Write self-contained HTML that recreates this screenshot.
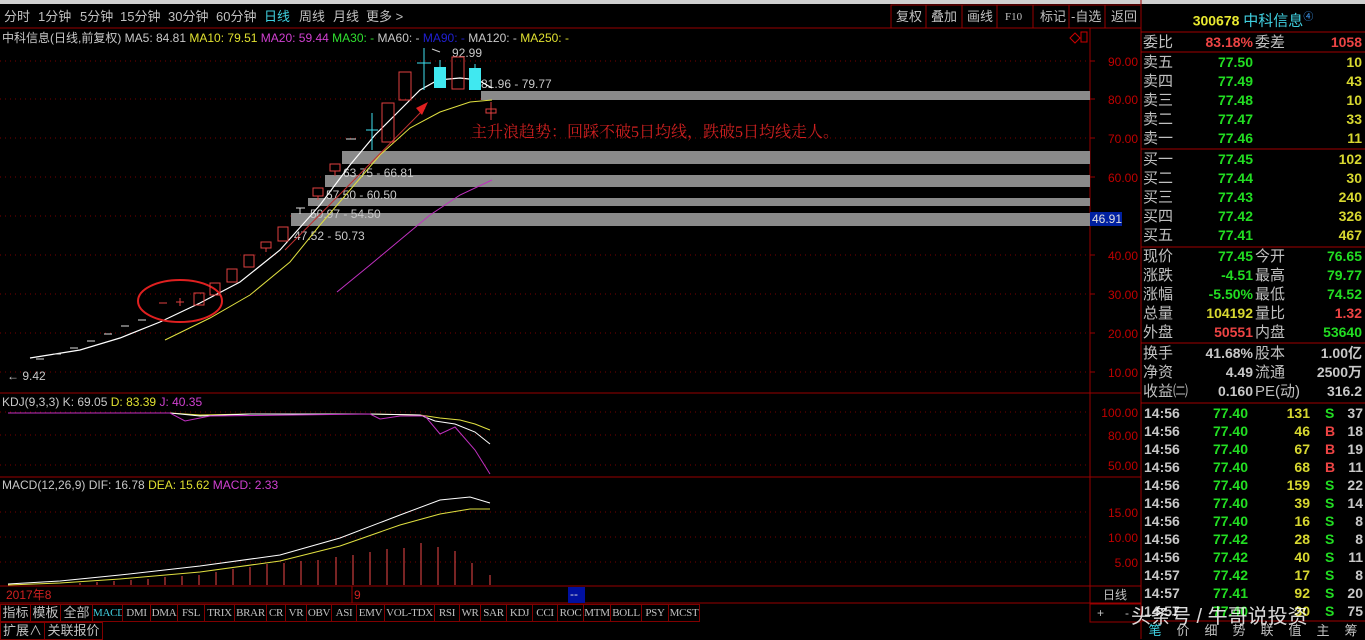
<!DOCTYPE html>
<html><head><meta charset="utf-8">
<style>
*{margin:0;padding:0;box-sizing:border-box}
body{width:1365px;height:639px;background:#000;overflow:hidden;position:relative;font-family:"Liberation Sans","Noto Sans CJK SC",sans-serif}
.a{position:absolute;white-space:nowrap}
.tabs{position:absolute;left:0;top:604px;height:18px;display:flex}
.tabs div{border:1px solid #800000;border-left:none;height:18px;color:#c0c0c0;font:11px "Liberation Serif","Noto Serif CJK SC",serif;line-height:16px;padding:0;text-align:center;overflow:hidden;letter-spacing:-0.3px}
.tabs div.c{font-size:13px;font-family:"Liberation Sans","Noto Sans CJK SC",sans-serif;letter-spacing:0}
.rp{position:absolute;left:1141px;font-size:15px;height:19px;line-height:19px;width:224px}
.rp span{position:absolute;white-space:nowrap}
.l{left:2px;color:#c0c0c0}
.v1{right:112px;font-weight:bold;font-size:14px}
.l2{left:114px;color:#c0c0c0}
.v2{right:3px;font-weight:bold;font-size:14px}
.g{color:#22dd22}.y{color:#d8d830}.r{color:#ee4444}.w{color:#c8c8c8}
.tr{position:absolute;left:1141px;width:224px;height:18px;font-size:14px;font-weight:bold;line-height:18px}
.tr span{position:absolute}
</style></head><body>
<svg width="1365" height="639" style="position:absolute;left:0;top:0" font-family="Liberation Sans, Noto Sans CJK SC, sans-serif">
<rect x="0" y="0" width="1365" height="4" fill="#d0d0d0"/>
<line x1="0" y1="28" x2="1141" y2="28" stroke="#900"/>
<g fill="#c0c0c0" font-size="13">
<text x="4" y="21">分时</text><text x="38" y="21">1分钟</text><text x="80" y="21">5分钟</text><text x="120" y="21">15分钟</text><text x="168" y="21">30分钟</text><text x="216" y="21">60分钟</text>
<text x="264" y="21" fill="#40d0e0">日线</text><text x="299" y="21">周线</text><text x="333" y="21">月线</text><text x="366" y="21">更多 &gt;</text>
</g>
<g stroke="#900" fill="none"><rect x="891" y="5" width="250" height="23"/>
<line x1="926" y1="5" x2="926" y2="28"/><line x1="962" y1="5" x2="962" y2="28"/><line x1="997" y1="5" x2="997" y2="28"/><line x1="1033" y1="5" x2="1033" y2="28"/><line x1="1069" y1="5" x2="1069" y2="28"/><line x1="1105" y1="5" x2="1105" y2="28"/></g>
<g fill="#c0c0c0" font-size="13"><text x="896" y="21">复权</text><text x="931" y="21">叠加</text><text x="967" y="21">画线</text><text x="1005" y="20" font-size="11" font-family="Liberation Serif">F10</text><text x="1040" y="21">标记</text><text x="1071" y="21">-自选</text><text x="1111" y="21">返回</text></g>
<line x1="1090" y1="28" x2="1090" y2="603" stroke="#900"/>
<line x1="1141" y1="0" x2="1141" y2="639" stroke="#900"/>
<line x1="0" y1="393" x2="1141" y2="393" stroke="#900"/>
<line x1="0" y1="477" x2="1141" y2="477" stroke="#900"/>
<line x1="0" y1="586" x2="1141" y2="586" stroke="#900"/>
<line x1="0" y1="603" x2="1141" y2="603" stroke="#900"/>
<line x1="352" y1="586" x2="352" y2="603" stroke="#900"/>
<path d="M1070 38 l5 -5 l5 5 l-5 5z" fill="none" stroke="#c00"/><rect x="1081" y="32" width="6" height="10" fill="none" stroke="#c00"/>
<g stroke="#700" stroke-dasharray="1 4">
<line x1="0" y1="61" x2="1090" y2="61"/><line x1="0" y1="99" x2="1090" y2="99"/><line x1="0" y1="138" x2="1090" y2="138"/><line x1="0" y1="177" x2="1090" y2="177"/><line x1="0" y1="216" x2="1090" y2="216"/><line x1="0" y1="255" x2="1090" y2="255"/><line x1="0" y1="294" x2="1090" y2="294"/><line x1="0" y1="333" x2="1090" y2="333"/><line x1="0" y1="372" x2="1090" y2="372"/>
<line x1="0" y1="412" x2="1090" y2="412"/><line x1="0" y1="435" x2="1090" y2="435"/><line x1="0" y1="465" x2="1090" y2="465"/>
<line x1="0" y1="512" x2="1090" y2="512"/><line x1="0" y1="537" x2="1090" y2="537"/><line x1="0" y1="562" x2="1090" y2="562"/>
</g>
<g stroke="#900"><line x1="1090" y1="61" x2="1095" y2="61"/><line x1="1090" y1="99" x2="1095" y2="99"/><line x1="1090" y1="138" x2="1095" y2="138"/><line x1="1090" y1="177" x2="1095" y2="177"/><line x1="1090" y1="255" x2="1095" y2="255"/><line x1="1090" y1="294" x2="1095" y2="294"/><line x1="1090" y1="333" x2="1095" y2="333"/><line x1="1090" y1="372" x2="1095" y2="372"/></g>
<g fill="#c00000" font-size="12" text-anchor="end">
<text x="1138" y="66">90.00</text><text x="1138" y="104">80.00</text><text x="1138" y="143">70.00</text><text x="1138" y="182">60.00</text><text x="1138" y="260">40.00</text><text x="1138" y="299">30.00</text><text x="1138" y="338">20.00</text><text x="1138" y="377">10.00</text>
<text x="1138" y="417">100.00</text><text x="1138" y="440">80.00</text><text x="1138" y="470">50.00</text>
<text x="1138" y="517">15.00</text><text x="1138" y="542">10.00</text><text x="1138" y="567">5.00</text>
</g>
<text x="2" y="42" font-size="12" fill="#c8c8c8">中科信息(日线,前复权) MA5: 84.81 <tspan fill="#e0e030">MA10: 79.51</tspan> <tspan fill="#d040d0">MA20: 59.44</tspan> <tspan fill="#30e030">MA30: -</tspan> <tspan fill="#c8c8c8">MA60: -</tspan> <tspan fill="#2020d0">MA90: -</tspan> <tspan>MA120: -</tspan> <tspan fill="#e0e030">MA250: -</tspan></text>
<g fill="#8a8a8a"><rect x="481" y="91" width="609" height="9"/><rect x="342" y="151" width="748" height="13"/><rect x="325" y="175" width="765" height="12"/><rect x="308" y="198" width="782" height="8"/><rect x="291" y="213" width="799" height="13"/></g>
<rect x="1090" y="212" width="32" height="14" fill="#0020a0"/><text x="1092" y="223" font-size="12" fill="#e0e0e0">46.91</text>
<g fill="#c8c8c8" font-size="12"><text x="481" y="88">81.96 - 79.77</text><text x="452" y="57">92.99</text><text x="343" y="177">63.75 - 66.81</text><text x="326" y="199">57.50 - 60.50</text><text x="294" y="240">47.52 - 50.73</text><text x="310" y="218">50.97 - 54.50</text><text x="7" y="380">← 9.42</text></g>
<path d="M440 52 l-8 -3" stroke="#ccc"/>
<polyline fill="none" stroke="#fff" stroke-width="1.2" points="30,358 80,350 120,338 160,322 200,303 240,282 280,250 320,205 350,165 375,135 400,110 420,90 438,80 460,78 478,80 492,88"/>
<polyline fill="none" stroke="#e0e040" points="165,340 210,318 250,295 290,262 320,225 350,190 380,155 410,128 440,112 470,102 492,100"/>
<polyline fill="none" stroke="#c030c0" points="337,292 370,265 400,240 430,215 460,195 492,180"/>
<line x1="285" y1="250" x2="425" y2="108" stroke="#c03030"/><path d="M428 102 l-12 6 l6 7z" fill="#e02020"/>
<ellipse cx="180" cy="301" rx="42" ry="21" fill="none" stroke="#e02020" stroke-width="2"/>
<text x="471" y="137" font-size="16" fill="#d02020" font-family="Liberation Serif, Noto Serif CJK SC, serif">主升浪趋势：回踩不破5日均线，跌破5日均线走人。</text>
<g stroke="#ddd"><line x1="36" y1="359" x2="44" y2="359"/><line x1="53" y1="354" x2="61" y2="354"/><line x1="70" y1="348" x2="78" y2="348"/><line x1="87" y1="341" x2="95" y2="341"/><line x1="104" y1="334" x2="112" y2="334"/><line x1="121" y1="326" x2="129" y2="326"/><line x1="138" y1="320" x2="146" y2="320"/><line x1="346" y1="139" x2="356" y2="139"/><line x1="296" y1="208" x2="305" y2="208"/><line x1="300" y1="208" x2="300" y2="214"/></g>
<g stroke="#e04040"><line x1="159" y1="303" x2="167" y2="303"/><line x1="176" y1="302" x2="184" y2="302"/><line x1="180" y1="298" x2="180" y2="306"/></g>
<g fill="none" stroke="#e04040">
<rect x="194" y="293" width="10" height="12"/><rect x="210" y="283" width="10" height="12"/><rect x="227" y="269" width="10" height="13"/><rect x="244" y="255" width="10" height="12"/><rect x="261" y="242" width="10" height="6"/><line x1="266" y1="248" x2="266" y2="252"/><rect x="278" y="227" width="10" height="14"/>
<rect x="313" y="188" width="10" height="8"/><line x1="318" y1="196" x2="318" y2="200"/><rect x="330" y="164" width="10" height="7"/><line x1="335" y1="171" x2="335" y2="176"/>
<rect x="382" y="103" width="12" height="39"/><rect x="399" y="72" width="12" height="28"/><rect x="452" y="57" width="12" height="32"/><rect x="486" y="109" width="10" height="4"/><line x1="491" y1="102" x2="491" y2="120"/>
</g>
<g stroke="#40e0f0"><line x1="372" y1="113" x2="372" y2="150"/><line x1="366" y1="130" x2="378" y2="130"/><line x1="424" y1="48" x2="424" y2="90"/><line x1="417" y1="63" x2="431" y2="63"/><line x1="440" y1="60" x2="440" y2="67"/><line x1="475" y1="64" x2="475" y2="68"/></g>
<g fill="#40e8f0"><rect x="434" y="67" width="12" height="21"/><rect x="469" y="68" width="12" height="22"/></g>
<text x="2" y="406" font-size="12" fill="#c8c8c8">KDJ(9,3,3) K: 69.05 <tspan fill="#e0e030">D: 83.39</tspan> <tspan fill="#d040d0">J: 40.35</tspan></text>
<polyline fill="none" stroke="#e0e040" points="8,413 170,413 200,415 250,414 370,414 420,415 440,418 460,420 475,424 490,430"/>
<polyline fill="none" stroke="#fff" points="8,413 170,413 200,416 250,414 370,414 420,415 435,421 455,424 475,432 490,444"/>
<polyline fill="none" stroke="#c030c0" points="8,413 170,413 185,421 210,416 370,414 380,419 400,416 425,416 440,434 455,427 475,450 490,474"/>
<text x="2" y="489" font-size="12" fill="#c8c8c8">MACD(12,26,9) DIF: 16.78 <tspan fill="#e0e030">DEA: 15.62</tspan> <tspan fill="#d040d0">MACD: 2.33</tspan></text>
<polyline fill="none" stroke="#fff" points="8,584 60,581 120,575 200,566 280,555 340,538 400,515 440,500 470,497 490,503"/>
<polyline fill="none" stroke="#e0e040" points="8,585 60,583 120,579 200,572 280,561 340,546 400,525 440,514 470,509 490,509"/>
<g stroke="#f04848">
<line x1="80" y1="585" x2="80" y2="583"/><line x1="97" y1="585" x2="97" y2="582"/><line x1="114" y1="585" x2="114" y2="581"/><line x1="131" y1="585" x2="131" y2="580"/><line x1="148" y1="585" x2="148" y2="579"/><line x1="165" y1="585" x2="165" y2="577"/><line x1="182" y1="585" x2="182" y2="576"/><line x1="199" y1="585" x2="199" y2="575"/><line x1="216" y1="585" x2="216" y2="572"/><line x1="233" y1="585" x2="233" y2="569"/><line x1="250" y1="585" x2="250" y2="567"/><line x1="267" y1="585" x2="267" y2="564"/><line x1="284" y1="585" x2="284" y2="563"/><line x1="301" y1="585" x2="301" y2="561"/><line x1="318" y1="585" x2="318" y2="560"/><line x1="336" y1="585" x2="336" y2="557"/><line x1="353" y1="585" x2="353" y2="555"/><line x1="370" y1="585" x2="370" y2="552"/><line x1="387" y1="585" x2="387" y2="549"/><line x1="404" y1="585" x2="404" y2="548"/><line x1="421" y1="585" x2="421" y2="543"/><line x1="438" y1="585" x2="438" y2="547"/><line x1="455" y1="585" x2="455" y2="551"/><line x1="472" y1="585" x2="472" y2="563"/><line x1="490" y1="585" x2="490" y2="575"/>
</g>
<text x="6" y="599" font-size="12" fill="#d02020">2017年8</text><text x="354" y="599" font-size="12" fill="#d02020">9</text>
<rect x="568" y="587" width="17" height="16" fill="#0010a0"/><text x="570" y="598" font-size="12" fill="#ddd">--</text>
<rect x="1090" y="586" width="51" height="17" fill="none" stroke="#900"/><text x="1103" y="599" font-size="12" fill="#c0c0c0">日线</text>
<rect x="1090" y="604" width="51" height="18" fill="none" stroke="#900"/><text x="1097" y="617" font-size="12" fill="#c0c0c0">+</text><text x="1125" y="617" font-size="12" fill="#c0c0c0">-</text>
</svg>
<div class="tabs"><div class="c" style="border-left:1px solid #800000;width:31px">指标</div><div class="c" style="width:30px">模板</div><div class="c" style="width:32px">全部</div><div style="color:#40d0e0;width:30px">MACD</div><div style="width:28px">DMI</div><div style="width:27px">DMA</div><div style="width:27px">FSL</div><div style="width:30px">TRIX</div><div style="width:32px">BRAR</div><div style="width:19px">CR</div><div style="width:21px">VR</div><div style="width:25px">OBV</div><div style="width:25px">ASI</div><div style="width:28px">EMV</div><div style="width:50px">VOL-TDX</div><div style="width:25px">RSI</div><div style="width:21px">WR</div><div style="width:26px">SAR</div><div style="width:26px">KDJ</div><div style="width:25px">CCI</div><div style="width:26px">ROC</div><div style="width:27px">MTM</div><div style="width:31px">BOLL</div><div style="width:27px">PSY</div><div style="width:31px">MCST</div></div>
<div class="tabs" style="top:622px"><div class="c" style="border-left:1px solid #800000;width:45px">扩展∧</div><div class="c" style="width:58px">关联报价</div></div>

<div class="a" style="left:1142px;top:8px;width:222px;text-align:center;font-size:14px"><b style="color:#e8e830">300678</b> <span style="color:#40d0e0;font-size:15px">中科信息</span><sup style="color:#40a0ff;font-size:10px">④</sup></div>
<svg width="224" height="639" style="position:absolute;left:1141px;top:0"><g stroke="#a00000"><line x1="0" y1="32" x2="224" y2="32"/><line x1="0" y1="52" x2="224" y2="52"/><line x1="0" y1="149" x2="224" y2="149"/><line x1="0" y1="247" x2="224" y2="247"/><line x1="0" y1="343" x2="224" y2="343"/><line x1="0" y1="403" x2="224" y2="403"/><line x1="0" y1="621" x2="224" y2="621"/></g></svg>
<div class="rp" style="top:33px"><span class="l">委比</span><span class="v1 r">83.18%</span><span class="l2">委差</span><span class="v2 r">1058</span></div>
<div class="rp" style="top:53px"><span class="l">卖五</span><span class="v1 g">77.50</span><span class="v2 y">10</span></div>
<div class="rp" style="top:72px"><span class="l">卖四</span><span class="v1 g">77.49</span><span class="v2 y">43</span></div>
<div class="rp" style="top:91px"><span class="l">卖三</span><span class="v1 g">77.48</span><span class="v2 y">10</span></div>
<div class="rp" style="top:110px"><span class="l">卖二</span><span class="v1 g">77.47</span><span class="v2 y">33</span></div>
<div class="rp" style="top:129px"><span class="l">卖一</span><span class="v1 g">77.46</span><span class="v2 y">11</span></div>
<div class="rp" style="top:150px"><span class="l">买一</span><span class="v1 g">77.45</span><span class="v2 y">102</span></div>
<div class="rp" style="top:169px"><span class="l">买二</span><span class="v1 g">77.44</span><span class="v2 y">30</span></div>
<div class="rp" style="top:188px"><span class="l">买三</span><span class="v1 g">77.43</span><span class="v2 y">240</span></div>
<div class="rp" style="top:207px"><span class="l">买四</span><span class="v1 g">77.42</span><span class="v2 y">326</span></div>
<div class="rp" style="top:226px"><span class="l">买五</span><span class="v1 g">77.41</span><span class="v2 y">467</span></div>
<div class="rp" style="top:247px"><span class="l">现价</span><span class="v1 g">77.45</span><span class="l2">今开</span><span class="v2 g">76.65</span></div>
<div class="rp" style="top:266px"><span class="l">涨跌</span><span class="v1 g">-4.51</span><span class="l2">最高</span><span class="v2 g">79.77</span></div>
<div class="rp" style="top:285px"><span class="l">涨幅</span><span class="v1 g">-5.50%</span><span class="l2">最低</span><span class="v2 g">74.52</span></div>
<div class="rp" style="top:304px"><span class="l">总量</span><span class="v1 y">104192</span><span class="l2">量比</span><span class="v2 r">1.32</span></div>
<div class="rp" style="top:323px"><span class="l">外盘</span><span class="v1 r">50551</span><span class="l2">内盘</span><span class="v2 g">53640</span></div>
<div class="rp" style="top:344px"><span class="l">换手</span><span class="v1 w">41.68%</span><span class="l2">股本</span><span class="v2 w">1.00亿</span></div>
<div class="rp" style="top:363px"><span class="l">净资</span><span class="v1 w">4.49</span><span class="l2">流通</span><span class="v2 w">2500万</span></div>
<div class="rp" style="top:382px"><span class="l">收益㈡</span><span class="v1 w">0.160</span><span class="l2">PE(动)</span><span class="v2 w">316.2</span></div>

<div class="tr" style="top:404px"><span class="w" style="left:3px">14:56</span><span class="g" style="right:117px">77.40</span><span class="y" style="right:55px">131</span><span class="g" style="left:184px">S</span><span class="w" style="right:2px">37</span></div>
<div class="tr" style="top:422px"><span class="w" style="left:3px">14:56</span><span class="g" style="right:117px">77.40</span><span class="y" style="right:55px">46</span><span class="r" style="left:184px">B</span><span class="w" style="right:2px">18</span></div>
<div class="tr" style="top:440px"><span class="w" style="left:3px">14:56</span><span class="g" style="right:117px">77.40</span><span class="y" style="right:55px">67</span><span class="r" style="left:184px">B</span><span class="w" style="right:2px">19</span></div>
<div class="tr" style="top:458px"><span class="w" style="left:3px">14:56</span><span class="g" style="right:117px">77.40</span><span class="y" style="right:55px">68</span><span class="r" style="left:184px">B</span><span class="w" style="right:2px">11</span></div>
<div class="tr" style="top:476px"><span class="w" style="left:3px">14:56</span><span class="g" style="right:117px">77.40</span><span class="y" style="right:55px">159</span><span class="g" style="left:184px">S</span><span class="w" style="right:2px">22</span></div>
<div class="tr" style="top:494px"><span class="w" style="left:3px">14:56</span><span class="g" style="right:117px">77.40</span><span class="y" style="right:55px">39</span><span class="g" style="left:184px">S</span><span class="w" style="right:2px">14</span></div>
<div class="tr" style="top:512px"><span class="w" style="left:3px">14:56</span><span class="g" style="right:117px">77.40</span><span class="y" style="right:55px">16</span><span class="g" style="left:184px">S</span><span class="w" style="right:2px">8</span></div>
<div class="tr" style="top:530px"><span class="w" style="left:3px">14:56</span><span class="g" style="right:117px">77.42</span><span class="y" style="right:55px">28</span><span class="g" style="left:184px">S</span><span class="w" style="right:2px">8</span></div>
<div class="tr" style="top:548px"><span class="w" style="left:3px">14:56</span><span class="g" style="right:117px">77.42</span><span class="y" style="right:55px">40</span><span class="g" style="left:184px">S</span><span class="w" style="right:2px">11</span></div>
<div class="tr" style="top:566px"><span class="w" style="left:3px">14:57</span><span class="g" style="right:117px">77.42</span><span class="y" style="right:55px">17</span><span class="g" style="left:184px">S</span><span class="w" style="right:2px">8</span></div>
<div class="tr" style="top:584px"><span class="w" style="left:3px">14:57</span><span class="g" style="right:117px">77.41</span><span class="y" style="right:55px">92</span><span class="g" style="left:184px">S</span><span class="w" style="right:2px">20</span></div>
<div class="tr" style="top:602px"><span class="w" style="left:3px">14:57</span><span class="g" style="right:117px">77.40</span><span class="y" style="right:55px">30</span><span class="g" style="left:184px">S</span><span class="w" style="right:2px">75</span></div>
<div class="a" style="left:1141px;top:622px;width:224px;height:17px;display:flex;font-size:13px;color:#c0c0c0;line-height:17px"><span style="flex:1;text-align:center;color:#40d0e0">笔</span><span style="flex:1;text-align:center">价</span><span style="flex:1;text-align:center">细</span><span style="flex:1;text-align:center">势</span><span style="flex:1;text-align:center">联</span><span style="flex:1;text-align:center">值</span><span style="flex:1;text-align:center">主</span><span style="flex:1;text-align:center">筹</span></div>
<div class="a" style="left:1131px;top:600px;font-size:20px;color:rgba(255,255,255,0.85)">头条号 / 牛哥说投资</div>
</body></html>
